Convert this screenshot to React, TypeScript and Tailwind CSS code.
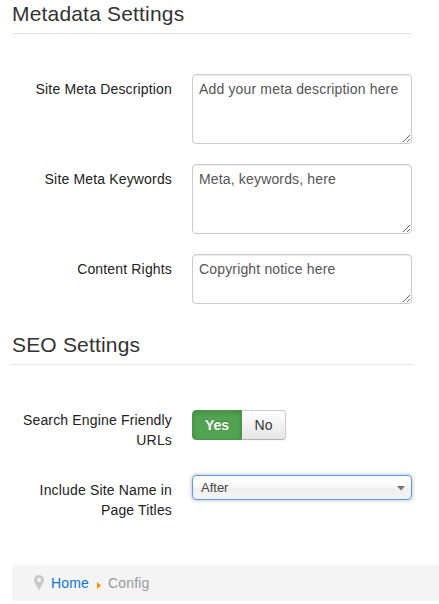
import React from 'react';

const textFields = [
  { id: 'description', label: 'Site Meta Description', value: 'Add your meta description here', height: 'h-[70px]' },
  { id: 'keywords', label: 'Site Meta Keywords', value: 'Meta, keywords, here', height: 'h-[70px]' },
  { id: 'rights', label: 'Content Rights', value: 'Copyright notice here', height: 'h-[50px]' },
];

const Legend = ({ children }: { children: React.ReactNode }) => (
  <h2 className="h-[41px] w-[400px] border-b border-[#e5e5e5] text-[21px] leading-[41px] tracking-[0.18px] text-[#333333]">
    {children}
  </h2>
);

const Label = ({ htmlFor, children }: { htmlFor?: string; children: React.ReactNode }) => (
  <label htmlFor={htmlFor} className="w-[160px] shrink-0 pt-[5px] text-right text-[#222222]">
    {children}
  </label>
);

const ResizeGrip = () => (
  <svg
    className="pointer-events-none absolute right-[2px] bottom-[2px]"
    width="7"
    height="7"
    viewBox="0 0 7 7"
    stroke="#555555"
    strokeWidth="0.9"
  >
    <path d="M0 7L7 0M4 7L7 4" />
  </svg>
);

const App: React.FC = () => {
  const [friendly, setFriendly] = React.useState(true);

  return (
    <div className="h-[604px] w-[439px] overflow-hidden bg-white pl-3 font-['Liberation_Sans',Arial,sans-serif] text-[14px] leading-5 tracking-[0.16px]">
      <div className="-mt-[7px]">
        <Legend>Metadata Settings</Legend>
        <div className="mt-10 flex flex-col gap-5">
          {textFields.map((field) => (
            <div key={field.id} className="flex gap-5">
              <Label htmlFor={field.id}>{field.label}</Label>
              <div className="relative w-[220px]">
                <textarea
                  id={field.id}
                  defaultValue={field.value}
                  className={`${field.height} block w-full resize-none overflow-hidden rounded-[4px] border border-[#cccccc] bg-white px-1.5 py-1 text-[#555555] shadow-[inset_0_1px_1px_rgba(0,0,0,0.075)] outline-none`}
                />
                <ResizeGrip />
              </div>
            </div>
          ))}
        </div>
      </div>

      <div className="mt-5">
        <Legend>SEO Settings</Legend>
        <div className="mt-10 flex gap-5">
          <Label>Search Engine Friendly URLs</Label>
          <div className="mt-[5px] flex h-[30px] tracking-normal">
            <button
              onClick={() => setFriendly(true)}
              aria-pressed={friendly}
              className="w-[50px] rounded-l-[4px] border border-[#46964a] bg-[#51a351] font-bold text-white shadow-[inset_0_2px_4px_rgba(0,0,0,0.15)] [text-shadow:0_-1px_0_rgba(0,0,0,0.25)]"
            >
              Yes
            </button>
            <button
              onClick={() => setFriendly(false)}
              aria-pressed={!friendly}
              className="w-[44px] rounded-r-[4px] border border-l-0 border-[#cccccc] border-b-[#b3b3b3] bg-linear-to-b from-white to-[#e6e6e6] text-[#333333] shadow-[0_1px_2px_rgba(0,0,0,0.05)] [text-shadow:0_1px_1px_rgba(255,255,255,0.75)]"
            >
              No
            </button>
          </div>
        </div>
        <div className="mt-[25px] flex gap-5">
          <Label>Include Site Name in Page Titles</Label>
          <button className="flex h-[25px] w-[220px] items-center justify-between rounded-[4px] border border-[#5897fb] bg-[linear-gradient(#ffffff_20%,#f6f6f6_50%,#eeeeee_52%,#f4f4f4_100%)] pr-[6px] pl-2 text-[13px] tracking-normal text-[#444444] shadow-[0_0_4px_rgba(0,0,0,0.3)]">
            <span>After</span>
            <svg className="mt-[2px]" width="8" height="5" viewBox="0 0 8 5" fill="#777777">
              <path d="M0 0H8L4 4.5Z" />
            </svg>
          </button>
        </div>
      </div>

      <nav className="mt-[45px] flex h-9 w-[460px] items-center rounded-[4px] bg-[#f4f4f4] pl-[22px]">
        <svg width="10" height="16" viewBox="0 0 10 16" fill="#c8c8c8">
          <path
            fillRule="evenodd"
            d="M5 0A5 5 0 0 0 0 5C0 8.5 3.4 11.5 5 15.5C6.6 11.5 10 8.5 10 5A5 5 0 0 0 5 0ZM5 2.8A2.1 2.1 0 1 1 5 7A2.1 2.1 0 0 1 5 2.8Z"
          />
        </svg>
        <a href="#home" className="ml-[7px] text-[#0d78cc]">
          Home
        </a>
        <svg className="mt-[5px] ml-2" width="4" height="7" viewBox="0 0 4 7" fill="#ff8800">
          <path d="M0 0L4 3.5L0 7Z" />
        </svg>
        <span className="ml-[7px] text-[#999999]">Config</span>
      </nav>
    </div>
  );
};

export default App;
